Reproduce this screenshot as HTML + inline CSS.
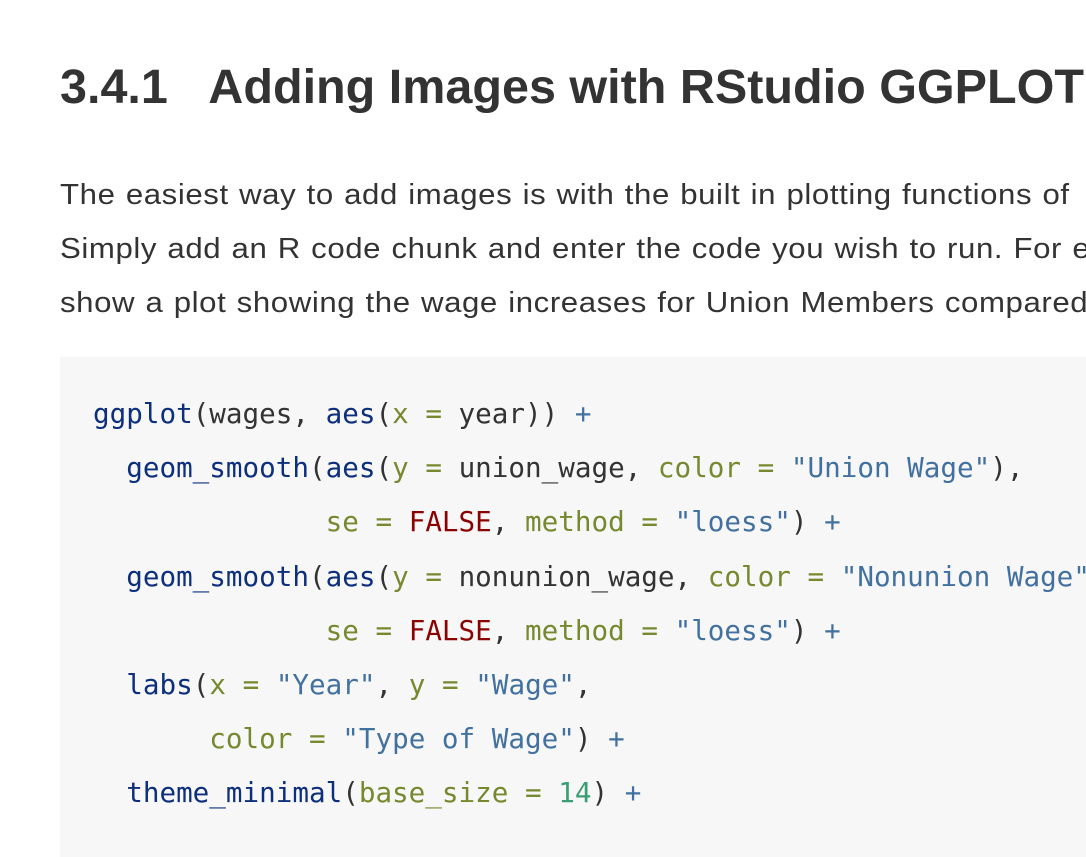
<!DOCTYPE html>
<html><head><meta charset="utf-8"><style>
html,body{margin:0;padding:0;background:#fff;width:1086px;height:810px;overflow:hidden}
h1{position:absolute;left:60px;top:57px;margin:0;font:bold 48.5px/60px "Liberation Sans",sans-serif;color:#333;white-space:nowrap}
p{position:absolute;left:60px;top:168px;margin:0;font:29px/54px "Liberation Sans",sans-serif;letter-spacing:0.55px;word-spacing:1px;color:#333;white-space:nowrap;transform:scaleX(1.075);transform-origin:0 0}
pre{position:absolute;left:60px;top:357px;width:1100px;height:500px;margin:0;background:#f7f7f7;padding:30px 0 0 33px;box-sizing:border-box;font:27.6px/54.2px "DejaVu Sans Mono",monospace;color:#333}
.f{color:#0d2f7c}.a{color:#76892f}.s{color:#4271a0}.k{color:#8b0000}.n{color:#3a9e73}.o{color:#4271a0}
</style></head><body>
<h1>3.4.1&nbsp;&nbsp;&nbsp;Adding Images with RStudio GGPLOT</h1>
<p>The easiest way to add images is with the built in plotting functions of<br>Simply add an R code chunk and enter the code you wish to run. For e<br>show a plot showing the wage increases for Union Members compared</p>
<pre><span class="f">ggplot</span>(wages, <span class="f">aes</span>(<span class="a">x</span> <span class="a">=</span> year)) <span class="o">+</span>
  <span class="f">geom_smooth</span>(<span class="f">aes</span>(<span class="a">y</span> <span class="a">=</span> union_wage, <span class="a">color</span> <span class="a">=</span> <span class="s">"Union Wage"</span>),
              <span class="a">se</span> <span class="a">=</span> <span class="k">FALSE</span>, <span class="a">method</span> <span class="a">=</span> <span class="s">"loess"</span>) <span class="o">+</span>
  <span class="f">geom_smooth</span>(<span class="f">aes</span>(<span class="a">y</span> <span class="a">=</span> nonunion_wage, <span class="a">color</span> <span class="a">=</span> <span class="s">"Nonunion Wage"</span>),
              <span class="a">se</span> <span class="a">=</span> <span class="k">FALSE</span>, <span class="a">method</span> <span class="a">=</span> <span class="s">"loess"</span>) <span class="o">+</span>
  <span class="f">labs</span>(<span class="a">x</span> <span class="a">=</span> <span class="s">"Year"</span>, <span class="a">y</span> <span class="a">=</span> <span class="s">"Wage"</span>,
       <span class="a">color</span> <span class="a">=</span> <span class="s">"Type of Wage"</span>) <span class="o">+</span>
  <span class="f">theme_minimal</span>(<span class="a">base_size</span> <span class="a">=</span> <span class="n">14</span>) <span class="o">+</span></pre>
</body></html>
